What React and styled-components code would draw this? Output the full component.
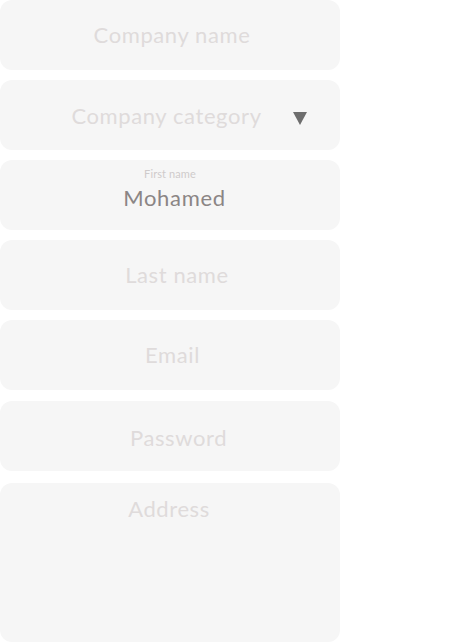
import React from "react";
import styled, { createGlobalStyle } from "styled-components";

const Global = createGlobalStyle`
  html, body { margin: 0; padding: 0; background: #ffffff; }
  body { font-family: Lato, "Noto Sans", sans-serif; }
`;

const Form = styled.div`
  display: flex;
  flex-direction: column;
  width: 340px;
`;

const Field = styled.div`
  position: relative;
  box-sizing: border-box;
  height: ${(p) => p.$h || 70}px;
  margin-bottom: ${(p) => p.$mb ?? 10}px;
  border-radius: 12px;
  background: #f6f6f6;
  display: flex;
  flex-direction: column;
  align-items: center;
  justify-content: ${(p) => (p.$top ? "flex-start" : "center")};
  padding-top: ${(p) => p.$pt || 0}px;
`;

const Text = styled.span`
  display: block;
  font-size: 22px;
  line-height: 26px;
  letter-spacing: ${(p) => (p.$filled ? 0.7 : 0.6)}px;
  color: ${(p) => (p.$filled ? "#8b8585" : "#dfdbdb")};
  transform: translate(${(p) => p.$dx || 0}px, ${(p) => p.$dy || 0}px);
  white-space: nowrap;
`;

const Label = styled.span`
  display: block;
  font-size: 11px;
  line-height: 12px;
  letter-spacing: 0.1px;
  color: #cfcbcb;
  margin-bottom: 5px;
`;

const Arrow = styled.span`
  position: absolute;
  right: 33px;
  top: 32px;
  width: 0;
  height: 0;
  border-left: 7.5px solid transparent;
  border-right: 7.5px solid transparent;
  border-top: 13px solid #6e6e6e;
`;

export default function App() {
  return (
    <>
      <Global />
      <Form>
        <Field>
          <Text $dx={2}>Company name</Text>
        </Field>
        <Field>
          <Text $dx={-3.5} $dy={1}>Company category</Text>
          <Arrow />
        </Field>
        <Field $top $pt={8}>
          <Label>First name</Label>
          <Text $filled $dx={4.5}>Mohamed</Text>
        </Field>
        <Field>
          <Text $dx={7}>Last name</Text>
        </Field>
        <Field $mb={11}>
          <Text $dx={2.5}>Email</Text>
        </Field>
        <Field $mb={12}>
          <Text $dx={8.5} $dy={2}>Password</Text>
        </Field>
        <Field $h={159} $mb={0} $top $pt={13}>
          <Text $dx={-1}>Address</Text>
        </Field>
      </Form>
    </>
  );
}
